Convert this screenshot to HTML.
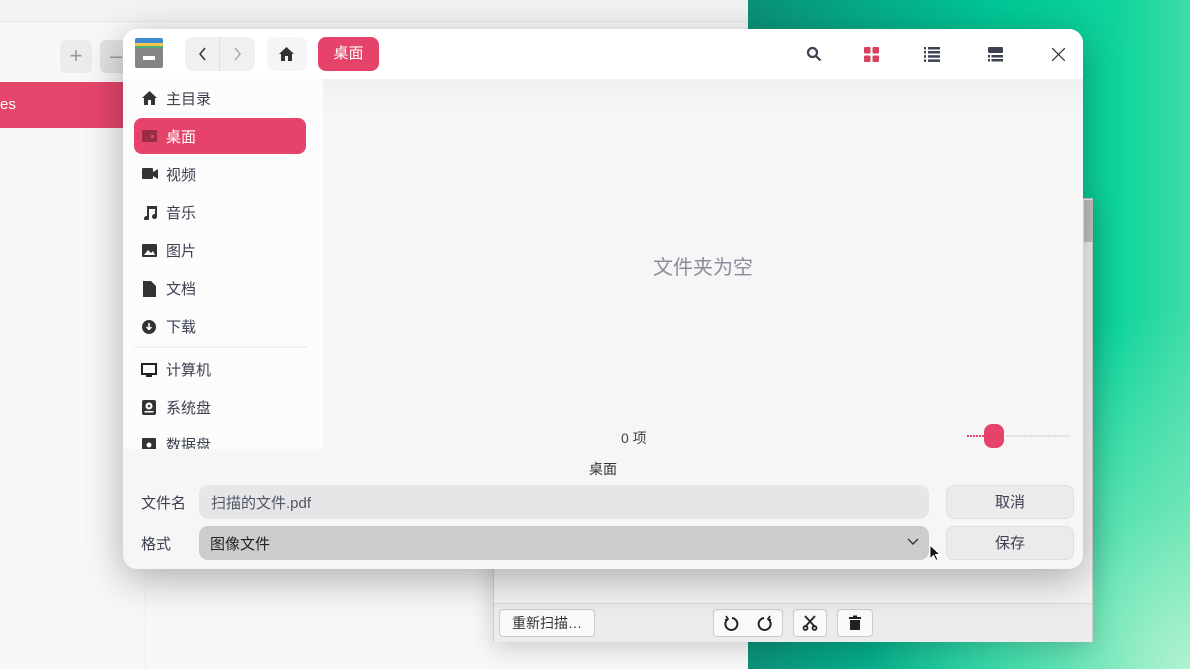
<!DOCTYPE html>
<html><head><meta charset="utf-8"><style>
*{box-sizing:border-box;margin:0;padding:0}
body{width:1190px;height:669px;overflow:hidden;position:relative;font-family:"Liberation Sans","Noto Sans CJK SC",sans-serif;background:linear-gradient(90deg,#0b8f76 0px,#0b8f76 740px,#06a886 850px,#00c896 1000px,#10d49c 1120px,#40dca8 1190px)}
.abs{position:absolute}
.t{font-size:15px;color:#3d4152}
</style></head><body>
<div class="abs" style="left:748px;top:0;width:442px;height:669px;background:radial-gradient(ellipse 320px 360px at 442px 669px,#b0f2d0 0%,rgba(140,236,192,.6) 45%,rgba(0,210,150,0) 100%)"></div>
<!-- back app window -->
<div class="abs" style="left:0;top:0;width:748px;height:669px;background:#f8f8f8"></div>
<div class="abs" style="left:0;top:0;width:748px;height:22px;background:#f3f3f3;border-bottom:1px solid #e8e8e8"></div>
<div class="abs" style="left:60px;top:40px;width:32px;height:33px;border-radius:6px;background:#ececec;color:#999;font-size:22px;text-align:center;line-height:32px">+</div>
<div class="abs" style="left:100px;top:40px;width:32px;height:33px;border-radius:6px;background:#e2e2e2;color:#999;font-size:22px;line-height:32px;padding-left:10px">–</div>
<div class="abs" style="left:0;top:82px;width:125px;height:46px;background:#e5456b;color:#fff;font-size:15px;line-height:46px">es</div>
<div class="abs" style="left:145px;top:570px;width:1px;height:99px;background:#eee"></div>
<!-- scanner window -->
<div class="abs" style="left:493px;top:198px;width:600px;height:444px;background:#f4f4f4;border:1px solid #d0d0d0;box-shadow:0 6px 24px rgba(0,0,0,.18)"></div>
<div class="abs" style="left:1084px;top:200px;width:9px;height:42px;background:#c4c4c4"></div>
<div class="abs" style="left:494px;top:603px;width:598px;height:39px;background:#ececee;border-top:1px solid #d8d8d8"></div>
<div class="abs" style="left:499px;top:609px;width:96px;height:28px;border:1px solid #ccc;border-radius:4px;background:#fafafa;font-size:14px;color:#333;text-align:center;line-height:26px">重新扫描…</div>
<div class="abs" style="left:713px;top:609px;width:70px;height:28px;border:1px solid #ccc;border-radius:4px;background:#fafafa"></div>
<svg class="abs" style="left:723px;top:615px" width="50" height="16" viewBox="0 0 50 16" fill="none" stroke="#222" stroke-width="2"><path d="M5 4a6 6 0 1 0 4-1"/><path d="M3 1l2 3-3 1" stroke-width="1.6"/><path d="M45 4a6 6 0 1 1-4-1"/><path d="M47 1l-2 3 3 1" stroke-width="1.6"/></svg>
<div class="abs" style="left:793px;top:609px;width:34px;height:28px;border:1px solid #ccc;border-radius:4px;background:#fafafa"></div>
<svg class="abs" style="left:802px;top:615px" width="16" height="16" viewBox="0 0 16 16" fill="none" stroke="#222" stroke-width="1.8"><path d="M3 1l10 11M13 1L3 12"/><circle cx="3.5" cy="13" r="2"/><circle cx="12.5" cy="13" r="2"/></svg>
<div class="abs" style="left:837px;top:609px;width:36px;height:28px;border:1px solid #ccc;border-radius:4px;background:#fafafa"></div>
<svg class="abs" style="left:847px;top:615px" width="16" height="16" viewBox="0 0 16 16"><rect x="2" y="2" width="12" height="2" fill="#222"/><rect x="6" y="0.5" width="4" height="2" fill="#222"/><rect x="3" y="5" width="10" height="10" fill="#222"/></svg>
<!-- dialog -->
<div class="abs" style="left:123px;top:29px;width:960px;height:540px;border-radius:14px;background:#f6f6f7;box-shadow:0 10px 40px rgba(0,0,0,.3);overflow:hidden">
 <div class="abs" style="left:0;top:0;width:960px;height:50px;background:#fff"></div>
 <div class="abs" style="left:0;top:50px;width:200px;height:370px;background:#fcfcfc"></div>
 <div class="abs" style="left:200px;top:50px;width:760px;height:30px;background:linear-gradient(#f0f0f1,#f6f6f7)"></div>
</div>
<!-- header -->
<div class="abs" style="left:135px;top:38px;width:28px;height:5px;background:#3d8ad0;border-radius:2px 2px 0 0"></div>
<div class="abs" style="left:135px;top:43px;width:28px;height:3px;background:#f4c44a"></div>
<div class="abs" style="left:135px;top:46px;width:28px;height:3px;background:#4caf7a"></div>
<div class="abs" style="left:135px;top:48px;width:28px;height:20px;background:#858585;border-radius:2px"></div>
<div class="abs" style="left:143px;top:56px;width:12px;height:4px;background:#fff"></div>
<div class="abs" style="left:185px;top:37px;width:70px;height:34px;border-radius:8px;background:#f0f0f0"></div>
<div class="abs" style="left:219px;top:37px;width:1px;height:34px;background:#ddd"></div>
<svg class="abs" style="left:195px;top:46px" width="50" height="16" viewBox="0 0 50 16" fill="none" stroke-width="1.5"><path d="M10 2L5 8l5 6" stroke="#333"/><path d="M40 2l5 6-5 6" stroke="#aaa"/></svg>
<div class="abs" style="left:267px;top:37px;width:40px;height:34px;border-radius:8px;background:#f5f5f5"></div>
<svg class="abs" style="left:279px;top:47px" width="15" height="14" viewBox="0 0 15 14"><path d="M7.5 0L0 7h2v7h4V9h3v5h4V7h2z" fill="#333"/></svg>
<div class="abs" style="left:318px;top:37px;width:61px;height:34px;border-radius:8px;background:#e5436a;color:#fff;font-size:15px;text-align:center;line-height:34px">桌面</div>
<svg class="abs" style="left:806px;top:46px" width="16" height="16" viewBox="0 0 16 16" fill="none" stroke="#3d4152" stroke-width="2.2"><circle cx="6.5" cy="6.5" r="4.5"/><path d="M10 10l4.5 4.5"/></svg>
<svg class="abs" style="left:864px;top:47px" width="15" height="15" viewBox="0 0 15 15" fill="#d5415f"><rect width="6.5" height="6.5" rx="1"/><rect x="8.5" width="6.5" height="6.5" rx="1"/><rect y="8.5" width="6.5" height="6.5" rx="1"/><rect x="8.5" y="8.5" width="6.5" height="6.5" rx="1"/></svg>
<svg class="abs" style="left:924px;top:47px" width="16" height="15" viewBox="0 0 16 15" fill="#3d4152"><rect width="2" height="2.5"/><rect x="4" width="12" height="2.5"/><rect y="4" width="2" height="2.5"/><rect x="4" y="4" width="12" height="2.5"/><rect y="8.2" width="2" height="2.5"/><rect x="4" y="8.2" width="12" height="2.5"/><rect y="12.4" width="2" height="2.5"/><rect x="4" y="12.4" width="12" height="2.5"/></svg>
<svg class="abs" style="left:988px;top:47px" width="15" height="15" viewBox="0 0 15 15" fill="#3d4152"><rect width="15" height="6" rx="1"/><rect y="8" width="2" height="2.5"/><rect x="3.5" y="8" width="11.5" height="2.5"/><rect y="12" width="2" height="2.5"/><rect x="3.5" y="12" width="11.5" height="2.5"/></svg>
<svg class="abs" style="left:1052px;top:48px" width="13" height="13" viewBox="0 0 13 13" stroke="#333" stroke-width="1.2"><path d="M0 0l13 13M13 0L0 13"/></svg>
<!-- sidebar -->
<div class="abs" style="left:134px;top:118px;width:172px;height:36px;border-radius:8px;background:#e5436a"></div>
<svg class="abs" style="left:142px;top:91px" width="15" height="14" viewBox="0 0 15 14"><path d="M7.5 0L0 7h2v7h4V9h3v5h4V7h2z" fill="#333"/></svg>
<div class="abs t" style="left:166px;top:88px">主目录</div>
<div class="abs" style="left:142px;top:130px;width:15px;height:12px;background:#9a2c48;border-radius:1px"></div>
<div class="abs" style="left:151px;top:135px;width:3px;height:3px;background:#e5436a"></div>
<div class="abs" style="left:166px;top:126px;font-size:15px;color:#fff">桌面</div>
<svg class="abs" style="left:142px;top:168px" width="16" height="12" viewBox="0 0 16 12" fill="#333"><rect width="11" height="11" rx="1"/><path d="M11 4l5-3v10l-5-3z"/></svg>
<div class="abs t" style="left:166px;top:164px">视频</div>
<svg class="abs" style="left:143px;top:205px" width="14" height="15" viewBox="0 0 14 15" fill="#333"><path d="M4 1h10v10.5a2.5 2.5 0 1 1-2-2.4V4H6v9.5a2.5 2.5 0 1 1-2-2.4z"/></svg>
<div class="abs t" style="left:166px;top:202px">音乐</div>
<svg class="abs" style="left:142px;top:244px" width="15" height="13" viewBox="0 0 15 13"><rect width="15" height="13" rx="1" fill="#333"/><path d="M2 11l4-5 3 3 2-2 2 4z" fill="#fff"/></svg>
<div class="abs t" style="left:166px;top:240px">图片</div>
<svg class="abs" style="left:143px;top:281px" width="13" height="16" viewBox="0 0 13 16"><path d="M0 0h8l5 5v11H0z" fill="#333"/></svg>
<div class="abs t" style="left:166px;top:278px">文档</div>
<svg class="abs" style="left:142px;top:320px" width="14" height="14" viewBox="0 0 14 14"><circle cx="7" cy="7" r="7" fill="#333"/><path d="M7 3v6M4.5 7L7 9.5 9.5 7" stroke="#fff" stroke-width="1.5" fill="none"/></svg>
<div class="abs t" style="left:166px;top:316px">下载</div>
<div class="abs" style="left:134px;top:346px;width:173px;height:2px;background:#f1f1f1"></div>
<svg class="abs" style="left:141px;top:363px" width="16" height="15" viewBox="0 0 16 15"><rect x="1" y="1" width="14" height="10" fill="none" stroke="#222" stroke-width="2"/><rect x="5" y="12" width="6" height="2" fill="#222"/></svg>
<div class="abs t" style="left:166px;top:359px">计算机</div>
<svg class="abs" style="left:142px;top:400px" width="14" height="15" viewBox="0 0 14 15"><rect width="14" height="15" rx="2" fill="#333"/><circle cx="7" cy="6" r="3.5" fill="#fff"/><circle cx="7" cy="6" r="1.3" fill="#333"/><rect x="2.5" y="11" width="9" height="1.5" fill="#fff"/></svg>
<div class="abs t" style="left:166px;top:397px">系统盘</div>
<div class="abs" style="left:123px;top:430px;width:200px;height:19px;overflow:hidden">
 <svg class="abs" style="left:19px;top:8px" width="14" height="14" viewBox="0 0 14 14"><rect width="14" height="14" rx="1" fill="#333"/><circle cx="7" cy="7" r="2.5" fill="#fff"/></svg>
 <div class="abs t" style="left:43px;top:4px">数据盘</div>
</div>
<!-- main -->
<div class="abs" style="left:653px;top:251px;font-size:20px;color:#8a8d99">文件夹为空</div>
<div class="abs" style="left:621px;top:428px;font-size:14px;color:#444">0 项</div>
<div class="abs" style="left:967px;top:435px;width:18px;height:2px;background:repeating-linear-gradient(90deg,#e5436a 0 2px,transparent 2px 3px)"></div>
<div class="abs" style="left:1006px;top:435px;width:64px;height:2px;background:repeating-linear-gradient(90deg,#ddd 0 2px,transparent 2px 3px)"></div>
<div class="abs" style="left:984px;top:424px;width:20px;height:24px;border-radius:8px;background:#e5436a"></div>
<div class="abs" style="left:589px;top:459px;font-size:14px;color:#333">桌面</div>
<!-- bottom form -->
<div class="abs t" style="left:141px;top:492px">文件名</div>
<div class="abs" style="left:199px;top:485px;width:730px;height:34px;border-radius:9px;background:#e6e6e8"></div>
<div class="abs" style="left:211px;top:492px;font-size:15px;color:#505564">扫描的文件.pdf</div>
<div class="abs t" style="left:141px;top:533px">格式</div>
<div class="abs" style="left:199px;top:526px;width:730px;height:34px;border-radius:9px;background:#cdcdcf"></div>
<div class="abs" style="left:210px;top:533px;font-size:15px;color:#222">图像文件</div>
<svg class="abs" style="left:907px;top:538px" width="12" height="8" viewBox="0 0 12 8" fill="none" stroke="#333" stroke-width="1.4"><path d="M1 1l5 5 5-5"/></svg>
<div class="abs" style="left:946px;top:485px;width:128px;height:34px;border-radius:8px;background:#ebebec;border:1px solid #dedede;text-align:center;line-height:34px;font-size:15px;color:#3d4152">取消</div>
<div class="abs" style="left:946px;top:526px;width:128px;height:34px;border-radius:8px;background:#ebebec;border:1px solid #dedede;text-align:center;line-height:34px;font-size:15px;color:#3d4152">保存</div>
<svg class="abs" style="left:929px;top:544px" width="12" height="18" viewBox="0 0 12 18"><path d="M1 1v14l3.5-3.5 2.5 5 2-1-2.5-5H11z" fill="#111" stroke="#fff" stroke-width="1"/></svg>
</body></html>
